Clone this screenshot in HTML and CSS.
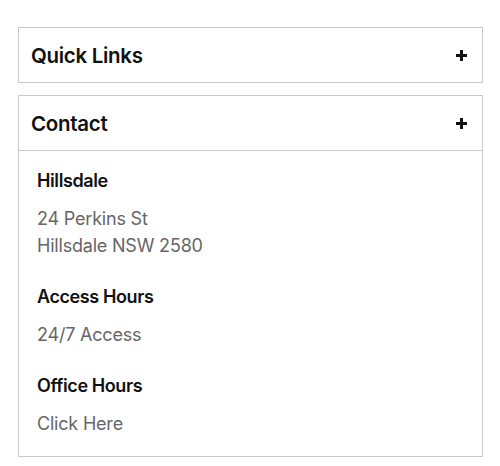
FILE: index.html
```html
<!DOCTYPE html>
<html>
<head>
<meta charset="utf-8">
<link rel="stylesheet" href="styles.css">
</head>
<body>
<div class="wrap">
  <section class="acc">
    <div class="acc-head"><span class="acc-title">Quick Links</span><span class="plus"></span></div>
  </section>
  <section class="acc open">
    <div class="acc-head"><span class="acc-title">Contact</span><span class="plus"></span></div>
    <div class="acc-body">
      <h4>Hillsdale</h4>
      <p>24 Perkins St<br>Hillsdale NSW 2580</p>
      <h4>Access Hours</h4>
      <p>24/7 Access</p>
      <h4>Office Hours</h4>
      <p>Click Here</p>
    </div>
  </section>
</div>
</body>
</html>
```
FILE: styles.css
```css
html, body { margin: 0; padding: 0; background: #fff; }
body { font-family: Inter, "Noto Sans", sans-serif; color: #111; }
.wrap { padding: 27px 17px 0 18px; display: flex; flex-direction: column; gap: 12px; }
.acc { border: 1px solid #c8c8c8; }
.acc-head { height: 54px; display: flex; align-items: center; justify-content: space-between; padding: 0 15px 0 12px; }
.open .acc-head { border-bottom: 1px solid #c8c8c8; }
.acc-title { font-size: 20.5px; font-weight: 600; letter-spacing: -0.3px; }
.plus { position: relative; width: 11px; height: 11px; }
.plus::before, .plus::after { content: ""; position: absolute; background: #111; }
.plus::before { left: 0; right: 0; top: 4px; height: 3px; }
.plus::after { top: 0; bottom: 0; left: 4px; width: 3px; }
.acc-body { padding: 19px 18px 19px 18px; }
.acc-body h4 { margin: 0 0 13px; font-size: 18px; line-height: 22px; font-weight: 600; letter-spacing: -0.4px; }
.acc-body p { margin: 0 0 27px; font-size: 18px; line-height: 27px; color: #666; letter-spacing: -0.2px; }
.acc-body p:last-child { margin-bottom: 0; }
```
